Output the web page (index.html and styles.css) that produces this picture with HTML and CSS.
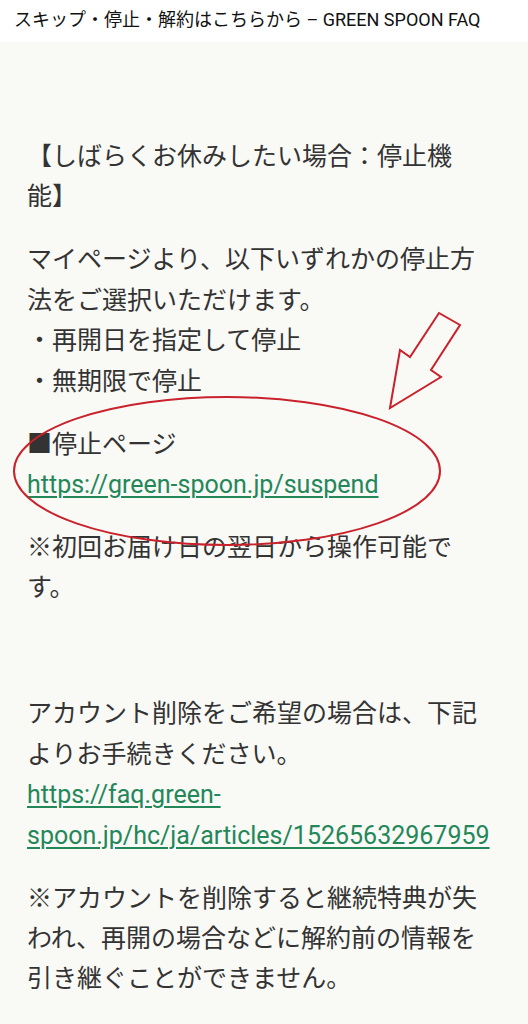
FILE: index.html
```html
<!DOCTYPE html>
<html lang="ja">
<head>
<meta charset="utf-8">
<title>スキップ・停止・解約はこちらから – GREEN SPOON FAQ</title>
<link rel="stylesheet" href="styles.css">
</head>
<body>
<header class="topbar">
  <h1 class="title">スキップ・停止・解約はこちらから – GREEN SPOON FAQ</h1>
</header>
<main class="article">
  <p>【しばらくお休みしたい場合：停止機能】</p>
  <p>マイページより、以下いずれかの停止方法をご選択いただけます。<br>・再開日を指定して停止<br>・無期限で停止</p>
  <p>■停止ページ<br><a class="link" href="#">https://green-spoon.jp/suspend</a></p>
  <p>※初回お届け日の翌日から操作可能です。</p>
  <p>&nbsp;</p>
  <p>アカウント削除をご希望の場合は、下記よりお手続きください。<br><a class="link" href="#">https://faq.green-spoon.jp/hc/ja/articles/15265632967959</a></p>
  <p>※アカウントを削除すると継続特典が失われ、再開の場合などに解約前の情報を引き継ぐことができません。</p>
  <svg class="markup" width="528" height="1024" viewBox="0 0 528 1024" aria-hidden="true">
    <ellipse cx="227" cy="471" rx="213" ry="74" fill="none" stroke="#c9222c" stroke-width="2"/>
    <polygon points="390,408 400,350 410,357 439,313 460,325 431,370 441,377" fill="none" stroke="#c9222c" stroke-width="2" stroke-linejoin="miter"/>
  </svg>
</main>
</body>
</html>
```
FILE: styles.css
```css
html, body {
  margin: 0;
  padding: 0;
}
body {
  background: #f9f9f5;
  font-family: "Roboto", "Noto Sans CJK JP", sans-serif;
  width: 528px;
  position: relative;
}
.topbar {
  background: #ffffff;
  height: 42px;
  padding: 0 14px;
  display: flex;
  align-items: center;
}
.title {
  margin: 0;
  font-size: 18px;
  font-weight: 400;
  color: #111;
  white-space: nowrap;
  line-height: 1;
  margin-top: -3px;
}
.article {
  padding: 95px 33px 40px 27px;
  color: #333;
  font-size: 25px;
  line-height: 40.4px;
  text-spacing-trim: space-all;
}
.article p {
  margin: 0 0 22.6px 0;
}
.link {
  color: #23875a;
  text-decoration: underline;
  text-underline-offset: 3px;
  text-decoration-thickness: 1.5px;
}
.markup {
  position: absolute;
  left: 0;
  top: 0;
  pointer-events: none;
}
```
